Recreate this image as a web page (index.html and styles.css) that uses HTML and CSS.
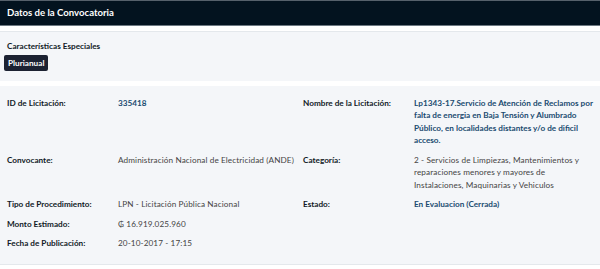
FILE: index.html
```html
<!DOCTYPE html>
<html lang="es">
<head>
  <meta charset="UTF-8" />
  <title>Datos de la Convocatoria</title>
  <link rel="stylesheet" href="styles.css">
</head>
<body>
  <div class="panel">
    <div class="panel-heading">Datos de la Convocatoria</div>

    <div class="features">
      <h4>Características Especiales</h4>
      <span class="badge">Plurianual</span>
    </div>

    <div class="details">
      <div class="label">ID de Licitación:</div>
      <div class="value strong">335418</div>
      <div class="label">Nombre de la Licitación:</div>
      <div class="value strong">Lp1343-17.Servicio de Atención de Reclamos por falta de energia en Baja Tensión y Alumbrado Público, en localidades distantes y/o de dificil acceso.</div>

      <div class="label">Convocante:</div>
      <div class="value">Administración Nacional de Electricidad (ANDE)</div>
      <div class="label">Categoría:</div>
      <div class="value">2 - Servicios de Limpiezas, Mantenimientos y reparaciones menores y mayores de Instalaciones, Maquinarias y Vehiculos</div>

      <div class="label">Tipo de Procedimiento:</div>
      <div class="value">LPN - Licitación Pública Nacional</div>
      <div class="label">Estado:</div>
      <div class="value strong">En Evaluacion (Cerrada)</div>

      <div class="label">Monto Estimado:</div>
      <div class="value">₲ 16.919.025.960</div>
      <div class="label"></div>
      <div class="value"></div>

      <div class="label">Fecha de Publicación:</div>
      <div class="value">20-10-2017 - 17:15</div>
    </div>
  </div>
</body>
</html>
```

FILE: styles.css
```css
body {
  font-family: Lato, 'Liberation Sans', sans-serif;
  margin: 0;
  background: #fff;
  color: #444;
  font-size: 8.2px;
}
.panel {
  border-top: 1px solid #56616b;
}
.panel-heading {
  background: #03131f;
  color: #fff;
  font-size: 9.6px;
  font-weight: bold;
  height: 24px;
  line-height: 24px;
  padding: 0 7px;
  border-bottom: 1px solid #6d7982;
}
.features {
  margin-top: 5px;
  background: #f4f6f9;
  border-top: 1px solid #e4e8ec;
  padding: 9px 4px 9px 4px;
  height: 31px;
}
.features h4 {
  margin: 0 0 3px 3px;
  font-size: 8.2px;
  font-weight: bold;
  color: #111a26;
  line-height: 11px;
}
.badge {
  display: inline-block;
  background: #1c2232;
  color: #fff;
  font-weight: bold;
  border-radius: 2px;
  padding: 0 4px;
  line-height: 16px;
}
.details {
  margin-top: 5px;
  background: #f4f6f9;
  border-bottom: 1px solid #e4e8ec;
  padding: 11px 0 14px 7px;
  display: grid;
  grid-template-columns: 111px 185px 111px 179px;
  row-gap: 7.2px;
  line-height: 12.4px;
}
.value {
  letter-spacing: 0.1px;
}
.label {
  font-weight: bold;
  color: #111a26;
}
.value.strong {
  font-weight: bold;
  letter-spacing: 0;
  color: #1a4b70;
}
```
